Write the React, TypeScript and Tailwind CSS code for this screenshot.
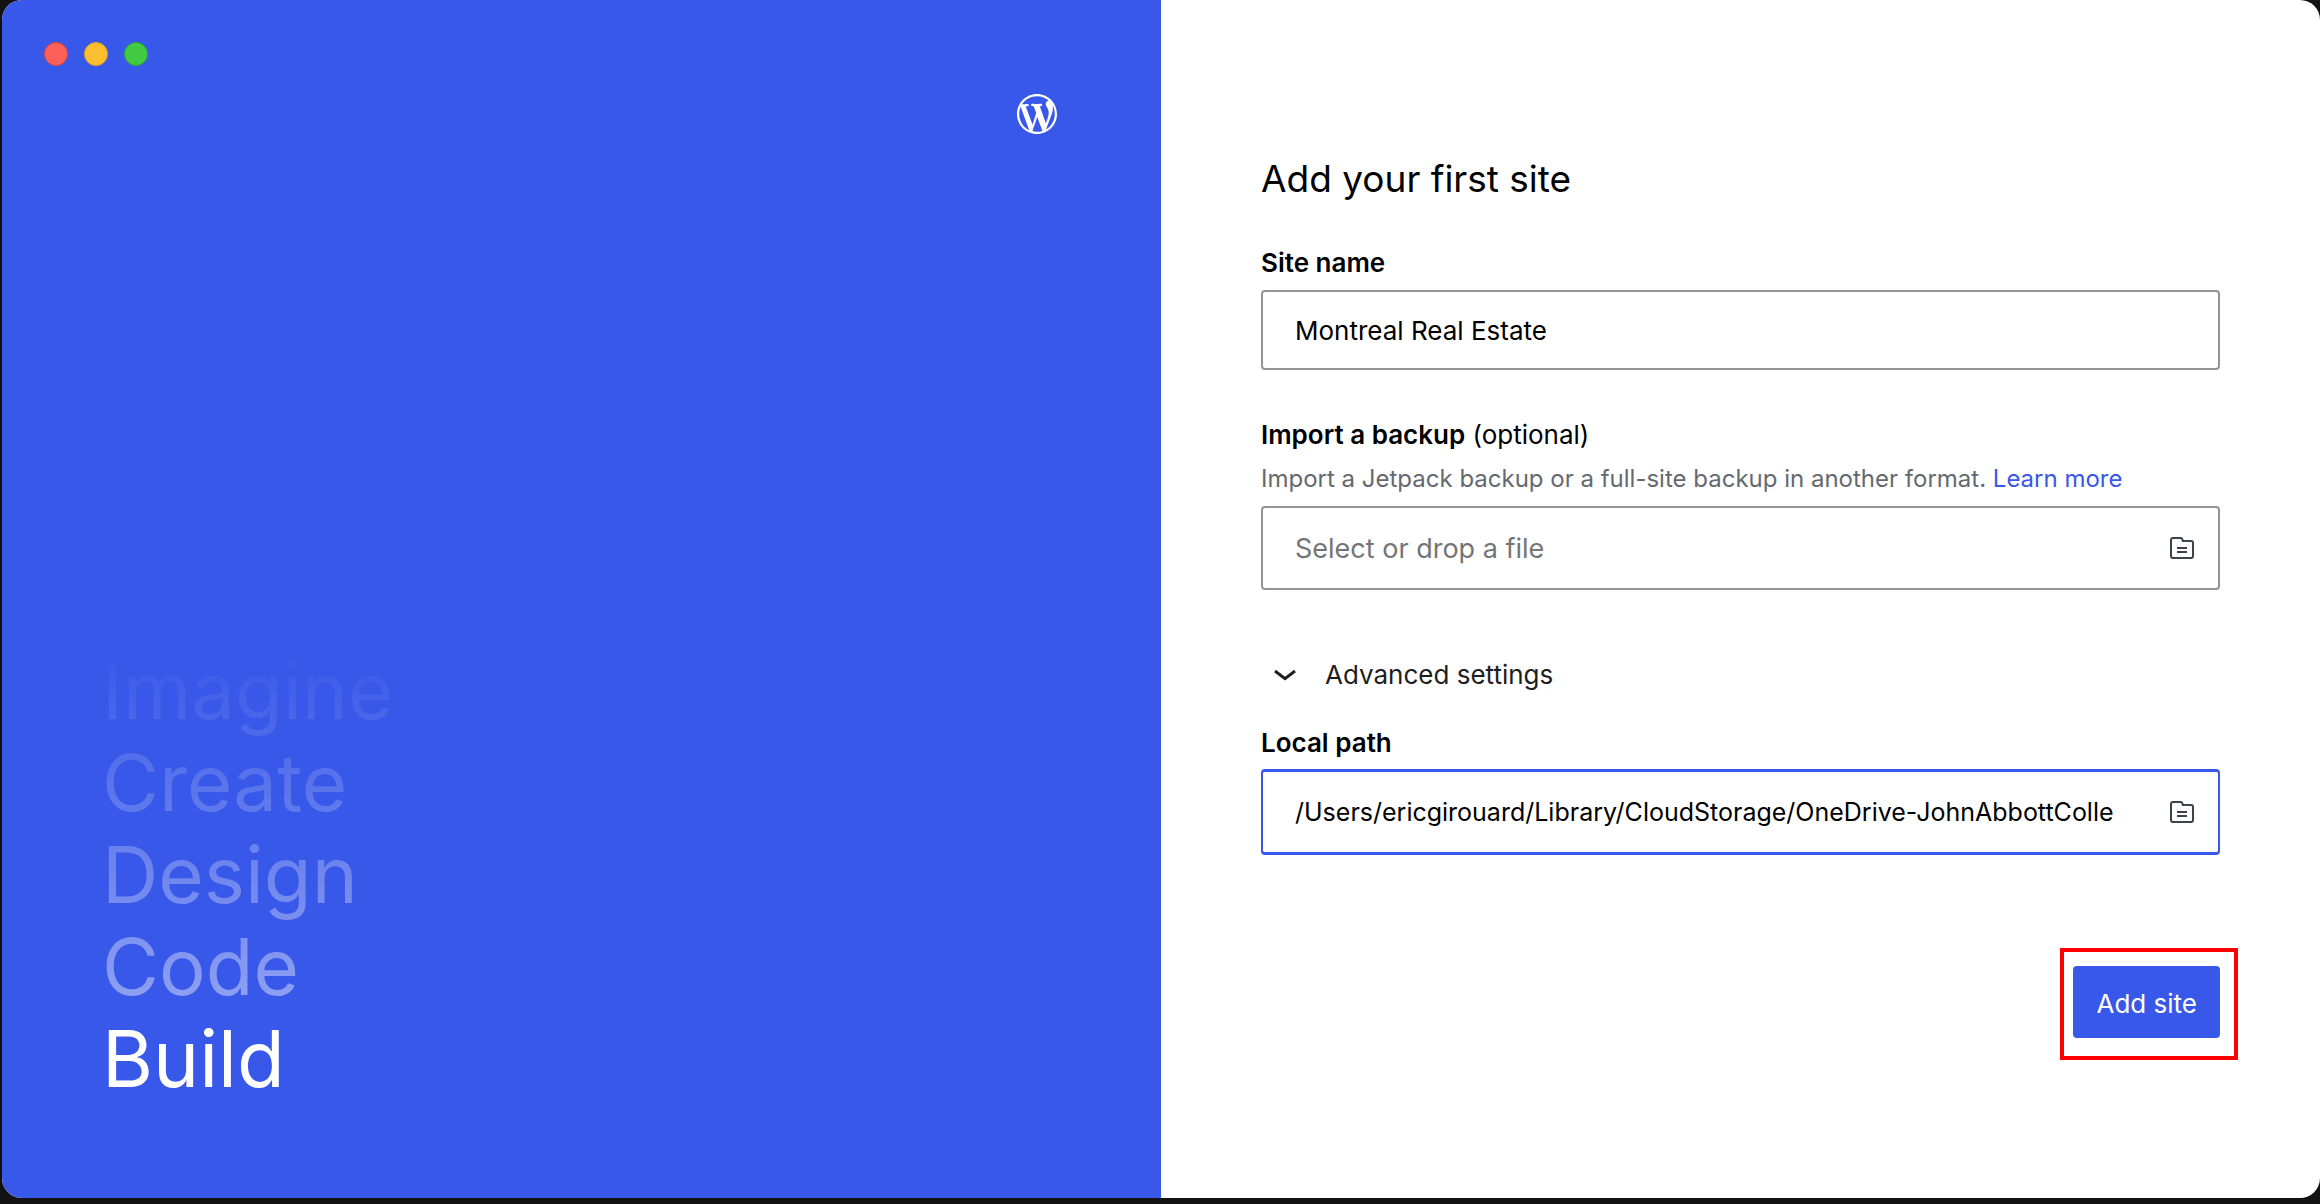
import { useState } from "react";
import type { ReactNode } from "react";

const FADED_WORDS = ["Imagine", "Create", "Design", "Code"];

function WordPressLogo() {
  return (
    <svg viewBox="-2 -2 24 24" className="size-12 self-end" fill="#fff" role="img" aria-label="WordPress">
      <path d="M20 10c0-5.51-4.49-10-10-10C4.48 0 0 4.49 0 10c0 5.52 4.48 10 10 10 5.51 0 10-4.48 10-10zM7.78 15.37L4.37 6.22c.55-.02 1.17-.08 1.17-.08.5-.06.44-1.13-.06-1.11 0 0-1.45.11-2.37.11-.18 0-.37 0-.58-.01C4.12 2.69 6.87 1.11 10 1.11c2.33 0 4.45.87 6.05 2.34-.68-.11-1.65.39-1.65 1.58 0 .74.45 1.36.9 2.1.35.61.55 1.36.55 2.46 0 1.49-1.4 5-1.4 5l-3.03-8.37c.54-.02.82-.17.82-.17.5-.05.44-1.25-.06-1.22 0 0-1.44.12-2.38.12-.87 0-2.33-.12-2.33-.12-.5-.03-.56 1.2-.06 1.22l.92.08 1.26 3.41zM17.41 10c.24-.64.74-1.87.43-4.25.7 1.29 1.05 2.71 1.05 4.25 0 3.29-1.73 6.24-4.4 7.78.97-2.59 1.94-5.2 2.92-7.78zM6.1 18.09C3.12 16.65 1.11 13.53 1.11 10c0-1.3.23-2.48.72-3.59C3.25 10.3 4.67 14.2 6.1 18.09zm4.03-6.63l2.58 6.98c-.86.29-1.76.45-2.71.45-.79 0-1.57-.11-2.29-.33.81-2.38 1.62-4.74 2.42-7.1z" />
    </svg>
  );
}

function FolderIcon() {
  return (
    <svg viewBox="0 0 24 22" className="h-[22px] w-6" fill="none" stroke="#3c434a" strokeWidth="2">
      <path d="M1 3a2 2 0 0 1 2-2h7.6a1.6 1.6 0 0 1 1.4.8L13 4h8a2 2 0 0 1 2 2v13a2 2 0 0 1-2 2H3a2 2 0 0 1-2-2z" />
      <path d="M7 11h10M7 15h10" />
    </svg>
  );
}

function Chevron() {
  return (
    <svg viewBox="0 0 22 12" className="h-3 w-[22px]" fill="none" stroke="#1e1e1e" strokeWidth="3">
      <path d="M1 2l10 7.6L21 2" />
    </svg>
  );
}

function PathField({
  focused,
  button,
  children,
}: {
  focused?: boolean;
  button: string;
  children: ReactNode;
}) {
  return (
    <div
      className={
        focused
          ? "flex h-[86px] items-center rounded-[4px] border-x-2 border-y-3 border-[#3858e9] pr-3 pl-8"
          : "flex h-[84px] items-center rounded-[4px] border-2 border-[#949494] pr-3 pl-8"
      }
    >
      {children}
      <button type="button" aria-label={button} className="ml-11 flex size-12 shrink-0 items-center justify-center">
        <FolderIcon />
      </button>
    </div>
  );
}

export default function App() {
  const [name, setName] = useState("Montreal Real Estate");
  const [path, setPath] = useState("/Users/ericgirouard/Library/CloudStorage/OneDrive-JohnAbbottCollege");

  return (
    <div className="flex min-h-screen bg-[#121212] pb-1.5 pl-0.5 font-['Inter',sans-serif] text-black">
      <div className="grid flex-1 grid-cols-2 overflow-hidden rounded-[20px] bg-white">
        <section className="flex flex-col bg-[#3858e9]">
          <div className="flex gap-4 px-[42px] pt-[42px]">
            <button type="button" aria-label="Close" className="size-6 rounded-full border border-[#e0443e] bg-[#fb6158]" />
            <button type="button" aria-label="Minimize" className="size-6 rounded-full border border-[#dea123] bg-[#fdbe2f]" />
            <button type="button" aria-label="Zoom" className="size-6 rounded-full border border-[#2da831] bg-[#42cb42]" />
          </div>
          <div className="flex flex-1 flex-col justify-between px-[100px] pt-6 pb-[93px]">
            <WordPressLogo />
            <div className="text-[78px] leading-[92px]">
              <ul className="bg-linear-to-b from-white/0 to-white/45 bg-clip-text text-transparent">
                {FADED_WORDS.map((word) => (
                  <li key={word}>{word}</li>
                ))}
              </ul>
              <p className="text-white">Build</p>
            </div>
          </div>
        </section>

        <main className="px-[100px] pt-[155px]">
          <form className="flex flex-col" onSubmit={(e) => e.preventDefault()}>
            <h1 className="text-[37px] leading-12">Add your first site</h1>

            <label htmlFor="site-name" className="mt-11 text-[26px] leading-8 font-semibold">
              Site name
            </label>
            <input
              id="site-name"
              type="text"
              value={name}
              onChange={(e) => setName(e.target.value)}
              className="mt-[11px] h-20 rounded-[4px] border-2 border-[#949494] px-8 text-[26px] outline-none"
            />

            <label htmlFor="backup" className="mt-[49px] text-[26px] leading-8">
              <span className="font-semibold">Import a backup</span> (optional)
            </label>
            <p className="mt-3 mb-[11px] text-[24px] leading-8 text-[#646970]">
              Import a Jetpack backup or a full-site backup in another format.{" "}
              <a href="#learn-more" className="text-[#3858e9]">
                Learn more
              </a>
            </p>
            <PathField button="Choose a backup file">
              <input
                id="backup"
                type="text"
                readOnly
                placeholder="Select or drop a file"
                className="min-w-0 flex-1 pt-0.5 text-[27px] outline-none placeholder:text-[#757575]"
              />
            </PathField>

            <button
              type="button"
              aria-expanded="true"
              className="mt-[69px] flex items-center self-start pl-[13px] text-[26px] leading-8 text-[#1e1e1e]"
            >
              <Chevron />
              <span className="ml-[29px]">Advanced settings</span>
            </button>

            <label htmlFor="local-path" className="mt-9 mb-[10px] text-[26px] leading-8 font-semibold">
              Local path
            </label>
            <PathField button="Choose a folder" focused>
              <input
                id="local-path"
                type="text"
                value={path}
                onChange={(e) => setPath(e.target.value)}
                className="min-w-0 flex-1 pt-0.5 text-[25px] outline-none"
              />
            </PathField>

            <div className="mt-[93px] -mr-[18px] self-end border-4 border-[#ff0000] pt-[14px] pr-[14px] pb-[18px] pl-[9px]">
              <button type="submit" className="h-[72px] rounded-[4px] bg-[#3858e9] px-[23px] pt-0.5 text-[26px] text-white">
                Add site
              </button>
            </div>
          </form>
        </main>
      </div>
    </div>
  );
}
